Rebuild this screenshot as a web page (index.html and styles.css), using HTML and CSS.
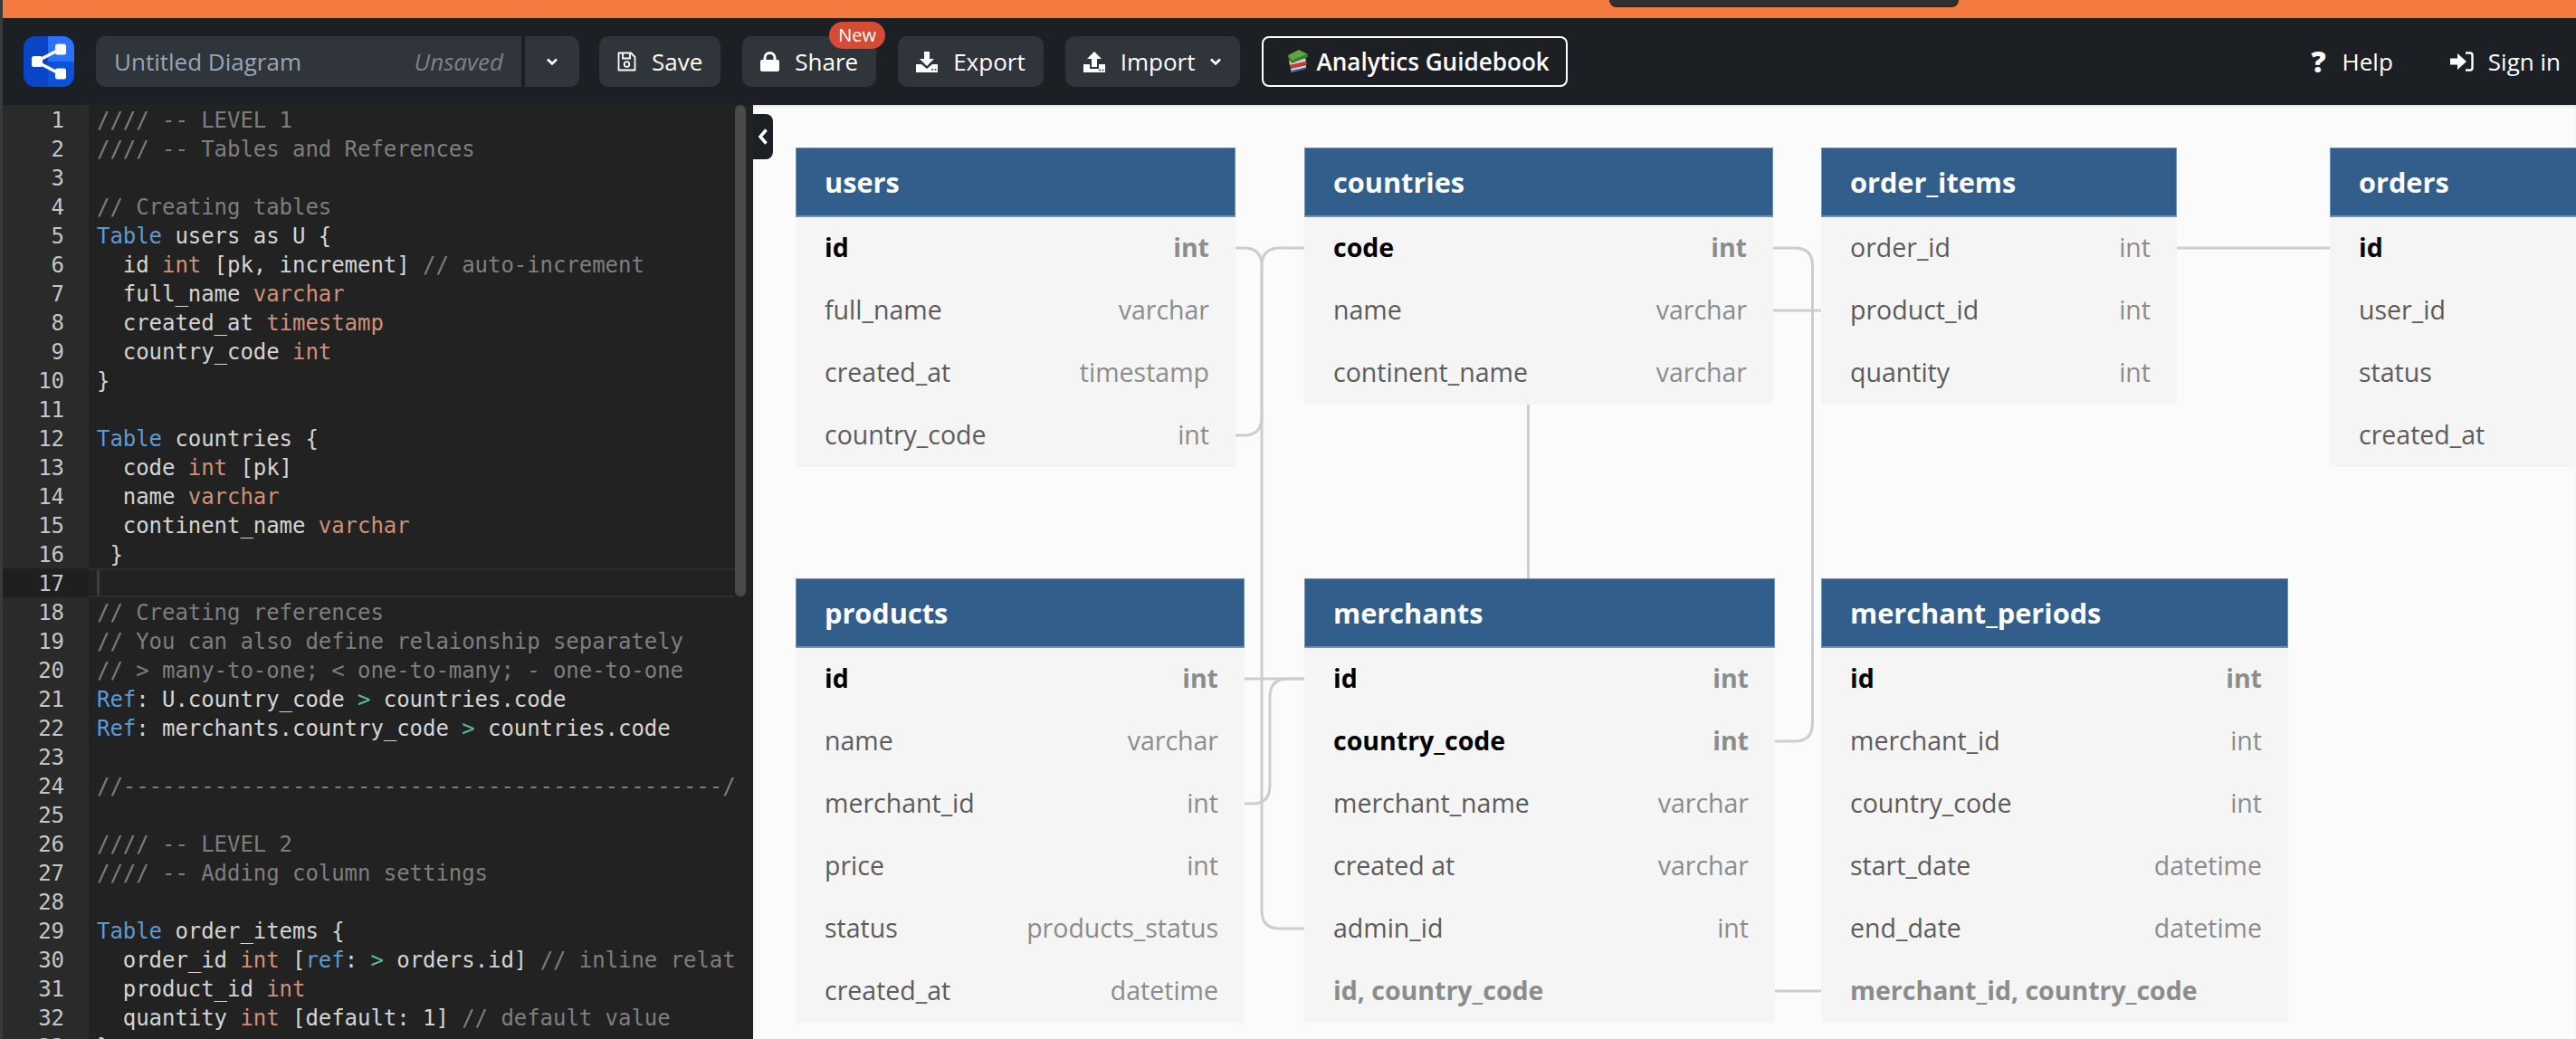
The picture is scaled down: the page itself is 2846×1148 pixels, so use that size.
FILE: index.html
```html
<!DOCTYPE html>
<html lang="en">
<head>
<meta charset="utf-8">
<title>dbdiagram</title>
<link rel="stylesheet" href="styles.css">
</head>
<body>
<div class="app">
  <div class="promo"><div class="promo-tab"></div></div>
  <header class="nav">
    <svg class="logo" viewBox="0 0 56 56">
      <defs><clipPath id="lc"><rect width="56" height="56" rx="13"/></clipPath></defs>
      <g clip-path="url(#lc)">
        <rect width="56" height="56" fill="#0a45c8"/>
        <rect x="27" width="29" height="28" fill="#2a72fb"/>
        <rect x="27" y="28" width="29" height="28" fill="#0c52d9"/>
      </g>
      <path d="M14 28 L41 14 M14 28 L41 42" stroke="#fff" stroke-width="3.5" fill="none"/>
      <rect x="9" y="22" width="12" height="12" rx="2.5" fill="#fff"/>
      <rect x="35" y="8.500" width="12" height="12" rx="2.500" fill="#fff"/>
      <rect x="35" y="35.500" width="12" height="12" rx="2.500" fill="#fff"/>
    </svg>
    <div class="name-group">
      <div class="name-box"><span class="name">Untitled Diagram</span><span class="unsaved">Unsaved</span></div>
      <div class="name-drop"><svg class="chev" viewBox="0 0 14 10"><path d="M2 2.500 L7 7.500 L12 2.500" fill="none" stroke="#fff" stroke-width="2.600"/></svg></div>
    </div>
    <button class="btn btn-save">
      <svg class="ico" viewBox="0 0 21 22"><path d="M1.500 1.500 H15 L19.500 6 V20.500 H1.500 Z" fill="none" stroke="#fff" stroke-width="1.800" stroke-linejoin="round"/><path d="M6 1.500 V7.500 H14 V1.500" fill="none" stroke="#fff" stroke-width="1.800"/><circle cx="10.500" cy="14" r="2.800" fill="none" stroke="#fff" stroke-width="1.800"/></svg>
      <span>Save</span>
    </button>
    <button class="btn btn-share">
      <svg class="ico" viewBox="0 0 21 22"><path d="M5 10 V7 a5.500 5.500 0 0 1 11 0 V10" fill="none" stroke="#fff" stroke-width="3"/><rect y="9" width="21" height="13" rx="2" fill="#fff"/></svg>
      <span>Share</span>
      <span class="badge">New</span>
    </button>
    <button class="btn btn-export">
      <svg class="ico ico-w" viewBox="0 0 24 24"><path d="M9 1 H15 V9 H20 L12 17 L4 9 H9 Z" fill="#fff"/><path d="M0 15 H6 L12 20 L18 15 H24 V24 H0 Z" fill="#fff"/><path d="M17 21 h2 M20.500 21 h2" stroke="#30343b" stroke-width="1.500"/></svg>
      <span>Export</span>
    </button>
    <button class="btn btn-import">
      <svg class="ico ico-w" viewBox="0 0 24 24"><path d="M12 1 L20 9 H15 V18 H9 V9 H4 Z" fill="#fff"/><path d="M0 15 H7 V20 H17 V15 H24 V24 H0 Z" fill="#fff"/><path d="M17 21.500 h2 M20.500 21.500 h2" stroke="#30343b" stroke-width="1.500"/></svg>
      <span>Import</span>
      <svg class="chev chev-i" viewBox="0 0 14 10"><path d="M2 2.500 L7 7.500 L12 2.500" fill="none" stroke="#fff" stroke-width="2.600"/></svg>
    </button>
    <a class="guide">
      <svg class="books" viewBox="0 0 22 26">
        <path d="M1 12 L19 9 L20 13 L2 17 Z" fill="#c9d3dc"/><path d="M2 17 L20 13 L21 16 L3 21 Z" fill="#d43a2a"/>
        <path d="M3 21 L20 17 L20 20 L4 25 Z" fill="#d9dee8"/><path d="M3 23 L20 19 L20 21 L4 25 Z" fill="#4d6aa8"/>
        <path d="M0 6 L12 0 L22 5 L4 12 Z" fill="#5ea53b"/><path d="M0 6 L4 12 L22 5 L22 8 L4 15 L0 9 Z" fill="#3a7d27"/>
      </svg>
      <span>Analytics Guidebook</span>
    </a>
    <div class="nav-right">
      <a class="link"><span class="q">?</span><span>Help</span></a>
      <a class="link">
        <svg class="ico-sign" viewBox="0 0 26 22"><path d="M0 7.500 H8 V2 L18 11 L8 20 V14.500 H0 Z" fill="#fff"/><path d="M17 1.500 H22 Q24.500 1.500 24.500 4 V18 Q24.500 20.500 22 20.500 H17" fill="none" stroke="#fff" stroke-width="2.400"/></svg>
        <span>Sign in</span>
      </a>
    </div>
  </header>
  <main class="main">
    <section class="editor">
      <div class="gutter">
        <div>1</div><div>2</div><div>3</div><div>4</div><div>5</div><div>6</div><div>7</div><div>8</div><div>9</div><div>10</div><div>11</div><div>12</div><div>13</div><div>14</div><div>15</div><div>16</div><div class="cur">17</div><div>18</div><div>19</div><div>20</div><div>21</div><div>22</div><div>23</div><div>24</div><div>25</div><div>26</div><div>27</div><div>28</div><div>29</div><div>30</div><div>31</div><div>32</div><div>33</div>
      </div>
      <div class="code">
        <div class="l c">//// -- LEVEL 1</div>
        <div class="l c">//// -- Tables and References</div>
        <div class="l"></div>
        <div class="l c">// Creating tables</div>
        <div class="l"><span class="k">Table</span> users as U {</div>
        <div class="l">  id <span class="t">int</span> [pk, increment] <span class="c">// auto-increment</span></div>
        <div class="l">  full_name <span class="t">varchar</span></div>
        <div class="l">  created_at <span class="t">timestamp</span></div>
        <div class="l">  country_code <span class="t">int</span></div>
        <div class="l">}</div>
        <div class="l"></div>
        <div class="l"><span class="k">Table</span> countries {</div>
        <div class="l">  code <span class="t">int</span> [pk]</div>
        <div class="l">  name <span class="t">varchar</span></div>
        <div class="l">  continent_name <span class="t">varchar</span></div>
        <div class="l"> }</div>
        <div class="l active"></div>
        <div class="l c">// Creating references</div>
        <div class="l c">// You can also define relaionship separately</div>
        <div class="l c">// &gt; many-to-one; &lt; one-to-many; - one-to-one</div>
        <div class="l"><span class="k">Ref</span>: U.country_code <span class="o">&gt;</span> countries.code</div>
        <div class="l"><span class="k">Ref</span>: merchants.country_code <span class="o">&gt;</span> countries.code</div>
        <div class="l"></div>
        <div class="l c">//----------------------------------------------/</div>
        <div class="l"></div>
        <div class="l c">//// -- LEVEL 2</div>
        <div class="l c">//// -- Adding column settings</div>
        <div class="l"></div>
        <div class="l"><span class="k">Table</span> order_items {</div>
        <div class="l">  order_id <span class="t">int</span> [<span class="k">ref</span>: <span class="o">&gt;</span> orders.id] <span class="c">// inline relationship</span></div>
        <div class="l">  product_id <span class="t">int</span></div>
        <div class="l">  quantity <span class="t">int</span> [default: 1] <span class="c">// default value</span></div>
        <div class="l">}</div>
      </div>
      <div class="scrollbar"></div>
    </section>
    <section class="canvas">
      <div class="collapse"><svg viewBox="0 0 12 20"><path d="M9.500 2.500 L3 10 L9.500 17.500" fill="none" stroke="#fff" stroke-width="3.500"/></svg></div>
      <svg class="links" viewBox="832 116 2014 1032">
        <path d="M1365 274 H1374 Q1394 274 1394 294 V1006 Q1394 1026 1414 1026 H1441"/>
        <path d="M1365 481 H1374 Q1394 481 1394 461 V294 Q1394 274 1414 274 H1441"/>
        <path d="M1375 888 H1384 Q1403 888 1403 868 V770 Q1403 750 1423 750 H1441"/>
        <path d="M1375 750 H1441"/>
        <path d="M1688.500 446 V639"/>
        <path d="M1959 274 H1983 Q2002.500 274 2002.500 294 V799 Q2002.500 819 1983 819 H1961"/>
        <path d="M1959 343 H2012"/>
        <path d="M2405 274 H2574"/>
        <path d="M1961 1095 H2012"/>
      </svg>

      <div class="tbl t-users">
        <div class="th">users</div>
        <div class="tr pk"><span>id</span><em>int</em></div>
        <div class="tr"><span>full_name</span><em>varchar</em></div>
        <div class="tr"><span>created_at</span><em>timestamp</em></div>
        <div class="tr"><span>country_code</span><em>int</em></div>
      </div>
      <div class="tbl t-countries">
        <div class="th">countries</div>
        <div class="tr pk"><span>code</span><em>int</em></div>
        <div class="tr"><span>name</span><em>varchar</em></div>
        <div class="tr"><span>continent_name</span><em>varchar</em></div>
      </div>
      <div class="tbl t-items">
        <div class="th">order_items</div>
        <div class="tr"><span>order_id</span><em>int</em></div>
        <div class="tr"><span>product_id</span><em>int</em></div>
        <div class="tr"><span>quantity</span><em>int</em></div>
      </div>
      <div class="tbl t-orders">
        <div class="th">orders</div>
        <div class="tr pk"><span>id</span></div>
        <div class="tr"><span>user_id</span></div>
        <div class="tr"><span>status</span></div>
        <div class="tr"><span>created_at</span></div>
      </div>
      <div class="tbl t-products">
        <div class="th">products</div>
        <div class="tr pk"><span>id</span><em>int</em></div>
        <div class="tr"><span>name</span><em>varchar</em></div>
        <div class="tr"><span>merchant_id</span><em>int</em></div>
        <div class="tr"><span>price</span><em>int</em></div>
        <div class="tr"><span>status</span><em>products_status</em></div>
        <div class="tr"><span>created_at</span><em>datetime</em></div>
      </div>
      <div class="tbl t-merchants">
        <div class="th">merchants</div>
        <div class="tr pk"><span>id</span><em>int</em></div>
        <div class="tr pk"><span>country_code</span><em>int</em></div>
        <div class="tr"><span>merchant_name</span><em>varchar</em></div>
        <div class="tr"><span>created at</span><em>varchar</em></div>
        <div class="tr"><span>admin_id</span><em>int</em></div>
        <div class="tr idx"><span>id, country_code</span></div>
      </div>
      <div class="tbl t-periods">
        <div class="th">merchant_periods</div>
        <div class="tr pk"><span>id</span><em>int</em></div>
        <div class="tr"><span>merchant_id</span><em>int</em></div>
        <div class="tr"><span>country_code</span><em>int</em></div>
        <div class="tr"><span>start_date</span><em>datetime</em></div>
        <div class="tr"><span>end_date</span><em>datetime</em></div>
        <div class="tr idx"><span>merchant_id, country_code</span></div>
      </div>
    </section>
  </main>
  <div class="edge"></div>
</div>
</body>
</html>
```

FILE: styles.css
```css
* { box-sizing: border-box; }
html, body { margin: 0; height: 1148px; overflow: hidden; background: #1c1f24; }
.app { position: relative; display: flex; flex-direction: column; width: 2846px; height: 1148px; font-family: "Open Sans", "Noto Sans", sans-serif; }
.edge { position: absolute; left: 0; top: 0; bottom: 0; width: 3px; background: #3a3a3c; }

.promo { position: relative; height: 20px; flex: none; background: #f37b3f; }
.promo-tab { position: absolute; left: 1778px; top: 0; width: 386px; height: 8px; background: #2f2f2f; border: 1px solid #1f1f1f; border-top: 0; border-radius: 0 0 10px 10px; }

.nav { display: flex; align-items: center; height: 96px; flex: none; padding: 0 17px 0 26px; background: #1c1f24; color: #fff; font-size: 26px; }
.logo { width: 56px; height: 56px; flex: none; margin-right: 24px; }
.name-group { display: flex; height: 56px; margin-right: 22px; background: #1c1f24; gap: 4px; }
.name-box { display: flex; align-items: center; justify-content: space-between; width: 470px; padding: 0 20px; background: #30343b; border-radius: 10px 0 0 10px; }
.name { color: #9aa5b5; }
.unsaved { color: #7d8188; font-style: italic; }
.name-drop { display: flex; align-items: center; justify-content: center; width: 60px; background: #30343b; border-radius: 0 10px 10px 0; }
.chev { width: 14px; height: 10px; }
.chev-i { margin-left: -1px; }

.btn { position: relative; display: flex; align-items: center; gap: 17px; height: 56px; margin-right: 24px; padding: 0 20px; background: #30343b; border: 0; border-radius: 10px; color: #fff; font: inherit; }
.ico { width: 21px; height: 22px; flex: none; }
.ico-w { width: 24px; height: 24px; }
.badge { position: absolute; right: -10px; top: -16px; width: 62px; height: 30px; display: flex; align-items: center; justify-content: center; background: #d64b33; border-radius: 15px; font-size: 20px; line-height: 1; }

.guide { display: flex; align-items: center; gap: 9px; width: 338px; height: 56px; padding-left: 27px; border: 2px solid #fff; border-radius: 8px; font-size: 26.1px; font-weight: 600; }
.books { width: 22px; height: 26px; flex: none; }

.nav-right { display: flex; align-items: center; gap: 63px; margin-left: auto; }
.link { display: flex; align-items: center; gap: 19px; }
.q { width: 15px; font-size: 32px; font-weight: 800; line-height: 1; }
.ico-sign { width: 26px; height: 22px; flex: none; margin-right: -3px; }

.main { display: flex; flex: 1; min-height: 0; }
.editor { position: relative; display: flex; width: 832px; flex: none; overflow: hidden; background: #222; font-family: "DejaVu Sans Mono", "Liberation Mono", monospace; font-size: 24px; letter-spacing: -0.05px; line-height: 34px; }
.gutter { width: 98px; flex: none; padding-right: 27px; background: #2a2a2a; color: #c6c6c6; text-align: right; }
.gutter div { height: 32px; }
.gutter .cur { margin: 0 -27px 0 0; padding-right: 27px; background: #1f1f1f; }
.code { width: 714px; flex: none; overflow: hidden; color: #d4d4d4; }
.l { height: 32px; padding-left: 9px; white-space: pre; }
.l.active { position: relative; border-top: 2px solid #2d2d2d; border-bottom: 2px solid #2d2d2d; }
.l.active::before { content: ""; position: absolute; left: 9px; top: 0; bottom: 0; width: 3px; background: #3c3c3c; }
.c { color: #7e7e7e; }
.k { color: #5b9bd5; }
.t { color: #ce9178; }
.o { color: #5fb8a2; }
.scrollbar { position: absolute; left: 812px; top: 0; width: 12px; height: 543px; background: #4a4a4a; border-radius: 6px; }

.canvas { position: relative; flex: 1; overflow: hidden; background: #fbfbfb; box-shadow: inset 0 3px 4px -2px rgba(0,0,0,.15); }
.collapse { position: absolute; z-index: 2; left: 0; top: 10px; display: flex; align-items: center; justify-content: center; width: 22px; height: 50px; background: #1c1f24; border-radius: 0 8px 8px 0; }
.collapse svg { width: 12px; height: 20px; }
.links { position: absolute; inset: 0; width: 2014px; height: 1032px; }
.links path { fill: none; stroke: #cdcdcd; stroke-width: 3; }

.tbl { position: absolute; background: #f5f5f5; }
.th { display: flex; align-items: center; height: 77px; padding: 0 0 1px 31px; background: #315e8a; border: 1px solid #6f93b8; border-width: 1px 1px 2px; color: #fff; font-size: 30.7px; font-weight: 700; }
.tr { display: flex; align-items: center; justify-content: space-between; height: 69px; padding: 0 29px 3px 32px; color: #5c5c5c; font-size: 28.5px; }
.tr em { color: #8c8c8c; font-style: normal; }
.pk span { color: #000; font-weight: 700; }
.pk em { font-weight: 700; }
.idx span { color: #8c8c8c; font-weight: 700; }

.t-users { left: 47px; top: 47px; width: 486px; }
.t-countries { left: 609px; top: 47px; width: 518px; }
.t-items { left: 1180px; top: 47px; width: 393px; }
.t-orders { left: 1742px; top: 47px; width: 500px; }
.t-products { left: 47px; top: 523px; width: 496px; }
.t-merchants { left: 609px; top: 523px; width: 520px; }
.t-periods { left: 1180px; top: 523px; width: 516px; }
```
